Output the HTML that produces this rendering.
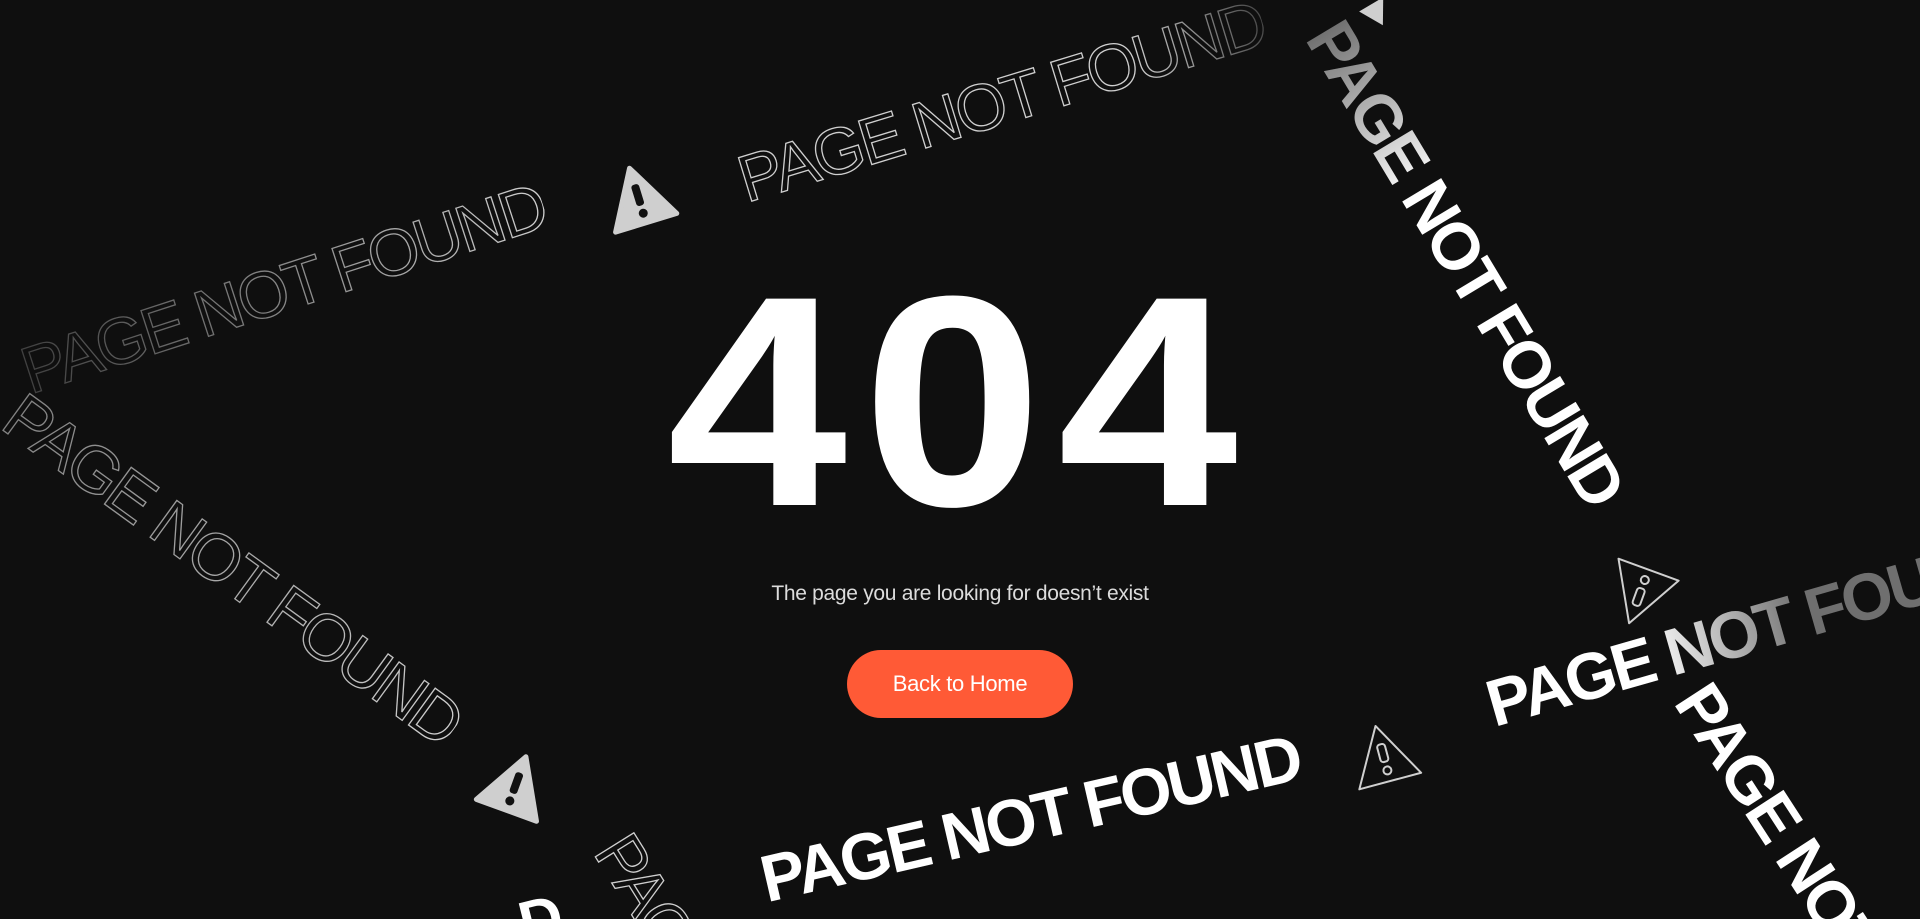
<!DOCTYPE html>
<html><head><meta charset="utf-8"><style>
html,body{margin:0;padding:0;width:1920px;height:919px;overflow:hidden;background:#0f0f0f;font-family:"Liberation Sans",sans-serif;}
#w{position:relative;width:1920px;height:919px;overflow:hidden;background:#0f0f0f;}
.t{position:absolute;white-space:nowrap;font-size:66px;letter-spacing:-3px;line-height:1;transform-origin:center center;}
.o{color:transparent;-webkit-text-stroke:1.3px #cfcfcf;font-weight:400;}
.f{color:#fff;font-weight:700;}
.ic{position:absolute;width:70px;height:64px;transform-origin:center;}
h1{position:absolute;left:0;width:1920px;top:251px;margin:0;text-align:center;font-size:300px;font-weight:700;color:#fff;letter-spacing:14px;line-height:1;transform:scaleX(1.08);}
.sub{position:absolute;left:0;width:1920px;top:582px;text-align:center;color:#dcdcdc;font-size:21px;letter-spacing:-0.3px;}
.btn{position:absolute;left:847px;top:650px;width:226px;height:68px;border-radius:34px;background:#ff5a36;color:#fff;font-size:22px;text-align:center;line-height:68px;letter-spacing:-0.3px;}
</style></head><body><div id="w">

<div class="t o" style="left:283px;top:288px;transform:translate(-50%,-50%) rotate(-18deg);-webkit-mask-image:linear-gradient(to right,rgba(0,0,0,.25),#000);">PAGE NOT FOUND</div>
<div class="t o" style="left:1001px;top:101px;transform:translate(-50%,-50%) rotate(-17deg);-webkit-mask-image:linear-gradient(to right,#000 75%,rgba(0,0,0,.3));">PAGE NOT FOUND</div>
<div class="t f" style="left:1466px;top:263px;transform:translate(-50%,-50%) rotate(59deg);-webkit-mask-image:linear-gradient(to right,rgba(0,0,0,.4),#000 35%);">PAGE NOT FOUND</div>
<div class="t o" style="left:233px;top:569px;transform:translate(-50%,-50%) rotate(36deg);-webkit-mask-image:linear-gradient(to right,rgba(0,0,0,.6),#000);">PAGE NOT FOUND</div>
<div class="t f" style="left:1030px;top:818px;transform:translate(-50%,-50%) rotate(-13deg);">PAGE NOT FOUND</div>
<div class="t f" style="left:1488px;top:705px;transform-origin:left center;transform:translateY(-50%) rotate(-16deg);-webkit-mask-image:linear-gradient(to right,#000 30%,rgba(0,0,0,.4) 60%);">PAGE NOT FOUND</div>
<div class="t f" style="left:1692px;top:690px;transform-origin:left center;transform:translateY(-50%) rotate(57deg);">PAGE NOT FOUND</div>
<div class="t o" style="left:612px;top:840px;transform-origin:left center;transform:translateY(-50%) rotate(58deg);">PAGE NOT FOUND</div>
<div class="t f" style="left:520px;top:925px;transform-origin:left center;transform:translateY(-50%) rotate(-14deg);font-size:60px;">D</div>

<svg class="ic" style="left:603px;top:164px;transform:rotate(-17deg);" viewBox="0 0 70 64"><path d="M35 3 L67 60 L3 60 Z" fill="#cfcfcf" stroke="#cfcfcf" stroke-width="5" stroke-linejoin="round"/><rect x="31" y="20" width="8" height="22" rx="3" fill="#111"/><circle cx="35" cy="50" r="4.5" fill="#111"/></svg>
<svg class="ic" style="left:481px;top:752px;transform:rotate(20deg);" viewBox="0 0 70 64"><path d="M35 3 L67 60 L3 60 Z" fill="#cfcfcf" stroke="#cfcfcf" stroke-width="5" stroke-linejoin="round"/><rect x="31" y="20" width="8" height="22" rx="3" fill="#111"/><circle cx="35" cy="50" r="4.5" fill="#111"/></svg>
<svg class="ic" style="left:1348px;top:722px;transform:rotate(-15deg);" viewBox="0 0 70 64"><path d="M35 3 L67 60 L3 60 Z" fill="none" stroke="#cfcfcf" stroke-width="2" stroke-linejoin="round"/><rect x="31" y="22" width="8" height="18" rx="3" fill="none" stroke="#cfcfcf" stroke-width="2"/><circle cx="35" cy="49" r="4" fill="none" stroke="#cfcfcf" stroke-width="2"/></svg>
<svg class="ic" style="left:1604px;top:564px;transform:rotate(200deg);" viewBox="0 0 70 64"><path d="M35 3 L67 60 L3 60 Z" fill="none" stroke="#cfcfcf" stroke-width="2" stroke-linejoin="round"/><rect x="31" y="22" width="8" height="18" rx="3" fill="none" stroke="#cfcfcf" stroke-width="2"/><circle cx="35" cy="49" r="4" fill="none" stroke="#cfcfcf" stroke-width="2"/></svg>
<svg style="position:absolute;left:1362px;top:-6px;width:30px;height:28px;transform:rotate(30deg);" viewBox="0 0 70 64"><path d="M35 3 L67 60 L3 60 Z" fill="#cfcfcf"/></svg>

<h1>404</h1>
<div class="sub">The page you are looking for doesn’t exist</div>
<div class="btn">Back to Home</div>
</div></body></html>
